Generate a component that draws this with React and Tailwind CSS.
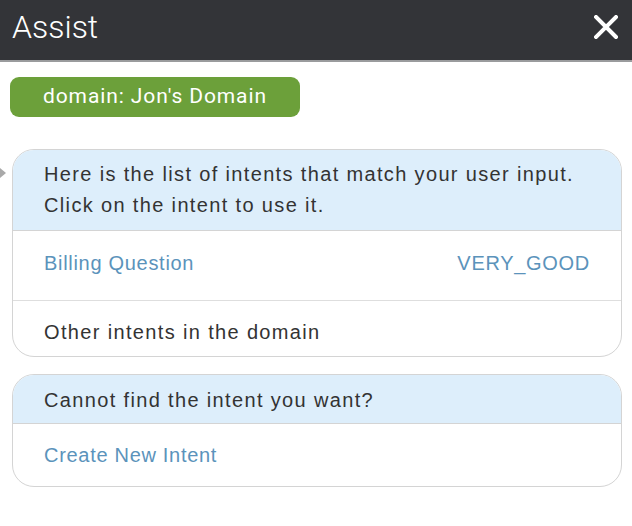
export default function App() {
  return (
    <div className="w-[632px] h-[526px] bg-white font-['Liberation_Sans',Arial,sans-serif] overflow-hidden">
      <div className="h-[62px] bg-[#333438] border-b-2 border-[#9a9b9d] flex items-center justify-between pl-[12px] pr-[14px]">
        <span className="font-['Roboto',sans-serif] font-light text-[32px] text-white leading-none -mt-[6px]">Assist</span>
        <svg width="24" height="24" viewBox="0 0 24 24" className="-mt-[6px]">
          <path d="M2 2 L22 22 M22 2 L2 22" stroke="#fff" strokeWidth="4" strokeLinecap="square" />
        </svg>
      </div>

      <div className="pl-[10px] mt-[15px]">
        <span className="inline-flex items-center h-[40px] px-[33px] rounded-[9px] bg-[#6ca03a] text-white font-['Roboto',sans-serif] text-[21px] tracking-[0.9px]">
          domain: Jon's Domain
        </span>
      </div>

      <div className="relative mt-[32px] ml-[12px] w-[610px]">
        <div className="absolute -left-[12px] top-[19px] w-0 h-0 border-y-[5px] border-y-transparent border-l-[6px] border-l-[#a9a9a9]" />
        <div className="rounded-[22px] border border-[#d4d4d4] overflow-hidden text-[20px] tracking-[1.35px] text-[#333]">
          <div className="h-[81px] bg-[#ddeefb] border-b border-[#d4d4d4] flex flex-col justify-center px-[31px] leading-[31px]">
            <div>Here is the list of intents that match your user input.</div>
            <div>Click on the intent to use it.</div>
          </div>
          <div className="h-[70px] border-b border-[#dedede] flex items-center justify-between px-[31px] pb-[5px] text-[#5b93bb] tracking-[0.7px]">
            <span>Billing Question</span>
            <span>VERY_GOOD</span>
          </div>
          <div className="h-[55px] flex items-center px-[31px] pt-[6px]">
            <span>Other intents in the domain</span>
          </div>
        </div>
      </div>

      <div className="mt-[17px] ml-[12px] w-[610px] rounded-[22px] border border-[#d4d4d4] overflow-hidden text-[20px] tracking-[1.35px] text-[#333]">
        <div className="h-[49px] bg-[#ddeefb] border-b border-[#d4d4d4] flex items-center px-[31px] pt-[1px]">
          Cannot find the intent you want?
        </div>
        <div className="h-[62px] flex items-center px-[31px] text-[#5b93bb] tracking-[0.7px]">
          Create New Intent
        </div>
      </div>
    </div>
  );
}
